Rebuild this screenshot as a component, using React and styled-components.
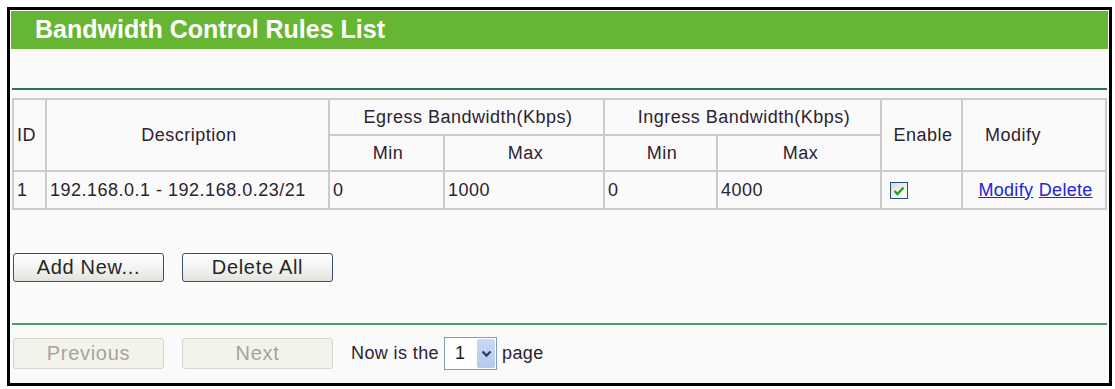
import styled, { createGlobalStyle } from "styled-components";

const GlobalStyle = createGlobalStyle`
  html, body {
    margin: 0;
    padding: 0;
    background: #ffffff;
  }
  body {
    font-family: "Liberation Sans", Arial, sans-serif;
  }
`;

const rules = [
  {
    id: 1,
    description: "192.168.0.1 - 192.168.0.23/21",
    egressMin: "0",
    egressMax: "1000",
    ingressMin: "0",
    ingressMax: "4000",
    enabled: true,
  },
];

export default function App() {
  return (
    <>
      <GlobalStyle />
      <Frame>
        <TitleBar>Bandwidth Control Rules List</TitleBar>
        <Content>
          <Divider $top={39} />
          <RulesTable>
            <colgroup>
              <col style={{ width: 33 }} />
              <col style={{ width: 283 }} />
              <col style={{ width: 115 }} />
              <col style={{ width: 160 }} />
              <col style={{ width: 113 }} />
              <col style={{ width: 164 }} />
              <col style={{ width: 81 }} />
              <col style={{ width: 144 }} />
            </colgroup>
            <thead>
              <HeadRow>
                <HeadCell rowSpan={2} $align="left">
                  ID
                </HeadCell>
                <HeadCell rowSpan={2}>Description</HeadCell>
                <HeadCell colSpan={2}>Egress Bandwidth(Kbps)</HeadCell>
                <HeadCell colSpan={2}>Ingress Bandwidth(Kbps)</HeadCell>
                <HeadCell rowSpan={2}>Enable</HeadCell>
                <HeadCell rowSpan={2} $align="left" $pad={22}>
                  Modify
                </HeadCell>
              </HeadRow>
              <HeadRow>
                <HeadCell>Min</HeadCell>
                <HeadCell>Max</HeadCell>
                <HeadCell>Min</HeadCell>
                <HeadCell>Max</HeadCell>
              </HeadRow>
            </thead>
            <tbody>
              {rules.map((r) => (
                <DataRow key={r.id}>
                  <DataCell>{r.id}</DataCell>
                  <DataCell>{r.description}</DataCell>
                  <DataCell>{r.egressMin}</DataCell>
                  <DataCell>{r.egressMax}</DataCell>
                  <DataCell>{r.ingressMin}</DataCell>
                  <DataCell>{r.ingressMax}</DataCell>
                  <DataCell $pad={8}>
                    <CheckBox checked={r.enabled} />
                  </DataCell>
                  <DataCell $align="center">
                    <LinkText href="#">Modify</LinkText>{" "}
                    <LinkText href="#">Delete</LinkText>
                  </DataCell>
                </DataRow>
              ))}
            </tbody>
          </RulesTable>

          <ButtonRow $top={43}>
            <Button>Add New...</Button>
            <Button>Delete All</Button>
          </ButtonRow>

          <Divider $top={41} $light />

          <ButtonRow $top={12}>
            <Button disabled>Previous</Button>
            <Button disabled>Next</Button>
            <PageText>
              Now is the
              <PageSelect>
                <span>1</span>
                <SelectArrow>
                  <svg width="11" height="8" viewBox="0 0 11 8">
                    <path
                      d="M1.5 1.5 L5.5 5.5 L9.5 1.5"
                      fill="none"
                      stroke="#2a3f6e"
                      strokeWidth="2.4"
                    />
                  </svg>
                </SelectArrow>
              </PageSelect>
              page
            </PageText>
          </ButtonRow>
        </Content>
      </Frame>
    </>
  );
}

function CheckBox({ checked }) {
  return (
    <CheckFrame>
      {checked && (
        <svg width="12" height="10" viewBox="0 0 12 10">
          <path
            d="M1.5 5 L4.5 8 L10.5 1.5"
            fill="none"
            stroke="#22a022"
            strokeWidth="2.4"
          />
        </svg>
      )}
    </CheckFrame>
  );
}

const Frame = styled.div`
  margin: 7px;
  width: 1099px;
  height: 373px;
  border: 3px solid #000000;
  background-color: #fafafa;
  display: flex;
  flex-direction: column;
`;

const TitleBar = styled.div`
  height: 38px;
  margin: 1px 1px 0 1px;
  background-color: #67b633;
  color: #ffffff;
  font-size: 25px;
  font-weight: 700;
  line-height: 36px;
  padding-left: 24px;
`;

const Content = styled.div`
  padding: 0 2px;
`;

const Divider = styled.div`
  margin-top: ${(p) => p.$top}px;
  height: 2px;
  background-color: ${(p) => (p.$light ? "#4f9d6c" : "#2d7350")};
`;

const RulesTable = styled.table`
  margin-top: 8px;
  width: 1094px;
  border-collapse: collapse;
  table-layout: fixed;
  color: #2b2330;
  font-size: 18px;
  letter-spacing: 0.5px;
`;

const HeadRow = styled.tr`
  height: 36px;
`;

const HeadCell = styled.th`
  border: 2px solid #cbcbc8;
  font-weight: 400;
  text-align: ${(p) => p.$align || "center"};
  padding: 0 0 0 ${(p) => p.$pad || 3}px;
  white-space: nowrap;
`;

const DataRow = styled.tr`
  height: 38px;
`;

const DataCell = styled.td`
  border: 2px solid #cbcbc8;
  text-align: ${(p) => p.$align || "left"};
  padding: 0 0 0 ${(p) => p.$pad || 3}px;
  white-space: nowrap;
`;

const CheckFrame = styled.span`
  display: inline-flex;
  align-items: center;
  justify-content: center;
  width: 18px;
  height: 17px;
  box-sizing: border-box;
  border: 1px solid #1f4f7d;
  background: linear-gradient(135deg, #dcdcd6, #ffffff);
  vertical-align: middle;
`;

const LinkText = styled.a`
  color: #2424d6;
  text-decoration: underline;
  letter-spacing: 0.3px;
`;

const ButtonRow = styled.div`
  margin-top: ${(p) => p.$top}px;
  display: flex;
  align-items: center;
  gap: 18px;
  padding-left: 1px;
`;

const Button = styled.button`
  width: 151px;
  height: ${(p) => (p.disabled ? 31 : 29)}px;
  box-sizing: border-box;
  border-radius: 3px;
  border: 1px solid ${(p) => (p.disabled ? "#d6d5cc" : "#3b4d6a")};
  background: ${(p) =>
    p.disabled
      ? "#f4f3ea"
      : "linear-gradient(#ffffff, #f2f2f0 55%, #e2e2de)"};
  color: ${(p) => (p.disabled ? "#a3a3a3" : "#262626")};
  font-family: "Liberation Sans", Arial, sans-serif;
  font-size: 20px;
  letter-spacing: 0.7px;
  padding: 0;
`;

const PageText = styled.div`
  display: flex;
  align-items: center;
  gap: 5px;
  color: #2b2330;
  font-size: 18px;
  letter-spacing: 0.4px;
`;

const PageSelect = styled.div`
  width: 53px;
  height: 33px;
  box-sizing: border-box;
  border: 1px solid #7f9db9;
  background: #ffffff;
  display: flex;
  align-items: center;
  justify-content: space-between;
  padding: 1px;

  span {
    padding-left: 9px;
    color: #1e1e1e;
  }
`;

const SelectArrow = styled.div`
  width: 18px;
  height: 29px;
  border-radius: 2px;
  background: linear-gradient(#cad9f7, #b5c8f0);
  display: flex;
  align-items: center;
  justify-content: center;
`;
